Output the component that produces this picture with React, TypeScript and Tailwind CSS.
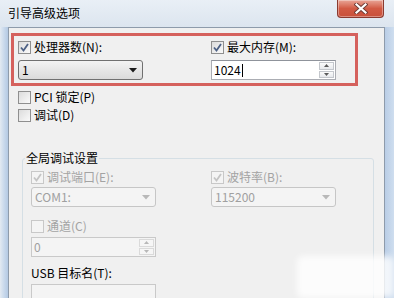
import * as React from 'react';

const font = "font-['Noto_Sans_CJK_SC','Liberation_Sans',sans-serif]";

function Check({ checked = false, disabled = false }: { checked?: boolean; disabled?: boolean }) {
  return (
    <span
      className={`relative inline-flex h-[13px] w-[13px] shrink-0 items-center justify-center border ${
        disabled ? 'border-[#c8c8c8] bg-[#f4f4f4]' : 'border-[#8f8f8f] bg-gradient-to-br from-[#dcdcdc] to-[#fafafa]'
      }`}
    >
      {checked ? (
        <svg width="11" height="11" viewBox="0 0 11 11">
          <path
            d="M2 5.5 L4.5 8.5 L9 2"
            fill="none"
            stroke={disabled ? '#c4c4c4' : '#4d6185'}
            strokeWidth="1.8"
          />
        </svg>
      ) : null}
    </span>
  );
}

function Label({ text, disabled = false }: { text: string; disabled?: boolean }) {
  return <span className={`ml-[3px] text-[12px] leading-[14px] ${disabled ? 'text-[#a3a3a3]' : 'text-black'}`}>{text}</span>;
}

function Row({ checked, disabled, text }: { checked?: boolean; disabled?: boolean; text: string }) {
  return (
    <div className="flex h-[14px] items-center">
      <Check checked={checked} disabled={disabled} />
      <Label text={text} disabled={disabled} />
    </div>
  );
}

function Combo({ value, disabled = false }: { value: string; disabled?: boolean }) {
  return (
    <div
      className={`flex h-[20px] w-[125px] items-center justify-between rounded-[3px] border pl-[3px] pr-[5px] ${
        disabled
          ? 'border-[#c6c6c6] bg-[#f4f4f4] text-[#a0a0a0]'
          : 'border-[#707070] bg-gradient-to-b from-[#f3f3f3] to-[#dadada] text-black'
      }`}
    >
      <span className="text-[12px] leading-[14px]">{value}</span>
      <svg width="8" height="5" viewBox="0 0 8 5">
        <path d="M0 0 H8 L4 4.5 Z" fill={disabled ? '#b8b8b8' : '#1a1a1a'} />
      </svg>
    </div>
  );
}

function Spin({ value, disabled = false, caret = false }: { value: string; disabled?: boolean; caret?: boolean }) {
  const arrow = disabled ? '#b8b8b8' : '#5a5a5a';
  return (
    <div
      className={`flex h-[20px] w-[125px] items-stretch border ${
        disabled ? 'border-[#c9c9c9] bg-[#f4f4f4] text-[#a0a0a0]' : 'border-[#abadb3] border-t-[#8f939b] bg-white text-black'
      }`}
    >
      <div className="flex flex-1 items-center pl-[2px]">
        <span className="text-[12px] leading-[14px]">{value}</span>
        {caret ? <span className="ml-[1px] h-[13px] w-px bg-black" /> : null}
      </div>
      <div className="my-[1px] mr-[1px] flex w-[15px] flex-col gap-px">
        <div className={`flex flex-1 items-center justify-center border ${disabled ? 'border-[#dadada] bg-[#f6f6f6]' : 'border-[#c4c7cc] bg-gradient-to-b from-[#fbfbfb] to-[#e7e9ec]'}`}>
          <svg width="5" height="3" viewBox="0 0 5 3">
            <path d="M0 3 H5 L2.5 0 Z" fill={arrow} />
          </svg>
        </div>
        <div className={`flex flex-1 items-center justify-center border ${disabled ? 'border-[#dadada] bg-[#f6f6f6]' : 'border-[#c4c7cc] bg-gradient-to-b from-[#fbfbfb] to-[#e7e9ec]'}`}>
          <svg width="5" height="3" viewBox="0 0 5 3">
            <path d="M0 0 H5 L2.5 3 Z" fill={arrow} />
          </svg>
        </div>
      </div>
    </div>
  );
}

function CloseButton() {
  return (
    <div className="mr-[10px] flex h-[18px] w-[47px] items-center justify-center rounded-b-[4px] border border-t-0 border-[#8a3a30] bg-gradient-to-b from-[#e8a597] via-[#d25a44] to-[#c8503b] shadow-[inset_0_0_0_1px_rgba(255,255,255,0.35)]">
      <svg width="14" height="11" viewBox="0 0 14 11">
        <path d="M2.5 1.5 L11.5 9.5 M11.5 1.5 L2.5 9.5" stroke="#6d3a34" strokeWidth="4" strokeLinecap="square" />
        <path d="M2.5 1.5 L11.5 9.5 M11.5 1.5 L2.5 9.5" stroke="#ffffff" strokeWidth="2.2" strokeLinecap="square" />
      </svg>
    </div>
  );
}

export default function App() {
  return (
    <div className={`relative flex h-[298px] w-[394px] flex-col overflow-hidden bg-[#dde6f0] ${font}`}>
      <div className="flex h-[27px] shrink-0 items-start justify-between bg-gradient-to-b from-[#e9eff6] to-[#dce5ef]">
        <div className="pl-[8px] pt-[6px] text-[12px] leading-[14px] text-black">引导高级选项</div>
        <CloseButton />
      </div>

      <div className="flex flex-1">
        <div className="w-[8px] shrink-0 bg-gradient-to-r from-[#e3eaf2] via-[#c9d9ec] to-[#b4c9e3]" />

        <div className="flex flex-1 flex-col border-l border-r border-t border-[#8e9bab] bg-[#f0f0f0]">
          <div className="ml-[2px] mt-[5px] flex h-[53px] w-[347px] gap-[68px] border-[3px] border-[#d5615d] pl-[4px] pt-[4px]">
            <div className="flex flex-col gap-[6px]">
              <Row checked text="处理器数(N):" />
              <Combo value="1" />
            </div>
            <div className="flex flex-col gap-[6px]">
              <Row checked text="最大内存(M):" />
              <Spin value="1024" caret />
            </div>
          </div>

          <div className="ml-[9px] mt-[4px] flex flex-col gap-[4px]">
            <Row text="PCI 锁定(P)" />
            <Row text="调试(D)" />
          </div>

          <fieldset className="ml-[13px] mt-[29px] w-[352px] flex-1 rounded-[3px] border border-[#d5dfe5] pl-[8px]">
            <legend className="-ml-[6px] px-[1px] text-[12px] leading-[14px] text-black">全局调试设置</legend>
            <div className="mt-[5px] flex gap-[55px]">
              <div className="flex flex-col gap-[3px]">
                <Row checked disabled text="调试端口(E):" />
                <Combo value="COM1:" disabled />
              </div>
              <div className="flex flex-col gap-[3px]">
                <Row checked disabled text="波特率(B):" />
                <Combo value="115200" disabled />
              </div>
            </div>
            <div className="mt-[12px] flex flex-col gap-[4px]">
              <Row disabled text="通道(C)" />
              <Spin value="0" disabled />
            </div>
            <div className="mt-[9px] flex flex-col gap-[4px]">
              <div className="h-[14px] text-[12px] leading-[14px] text-black">USB 目标名(T):</div>
              <div className="h-[20px] w-[125px] border border-[#c9c9c9] bg-[#f4f4f4]" />
            </div>
          </fieldset>
        </div>

        <div className="w-[9px] shrink-0 bg-gradient-to-r from-[#b9cde6] to-[#cfdeef]" />
      </div>

      <div className="absolute left-[297px] top-[256px] h-[42px] w-[97px] rounded-[6px] bg-white/80 blur-[3px]" />
    </div>
  );
}
